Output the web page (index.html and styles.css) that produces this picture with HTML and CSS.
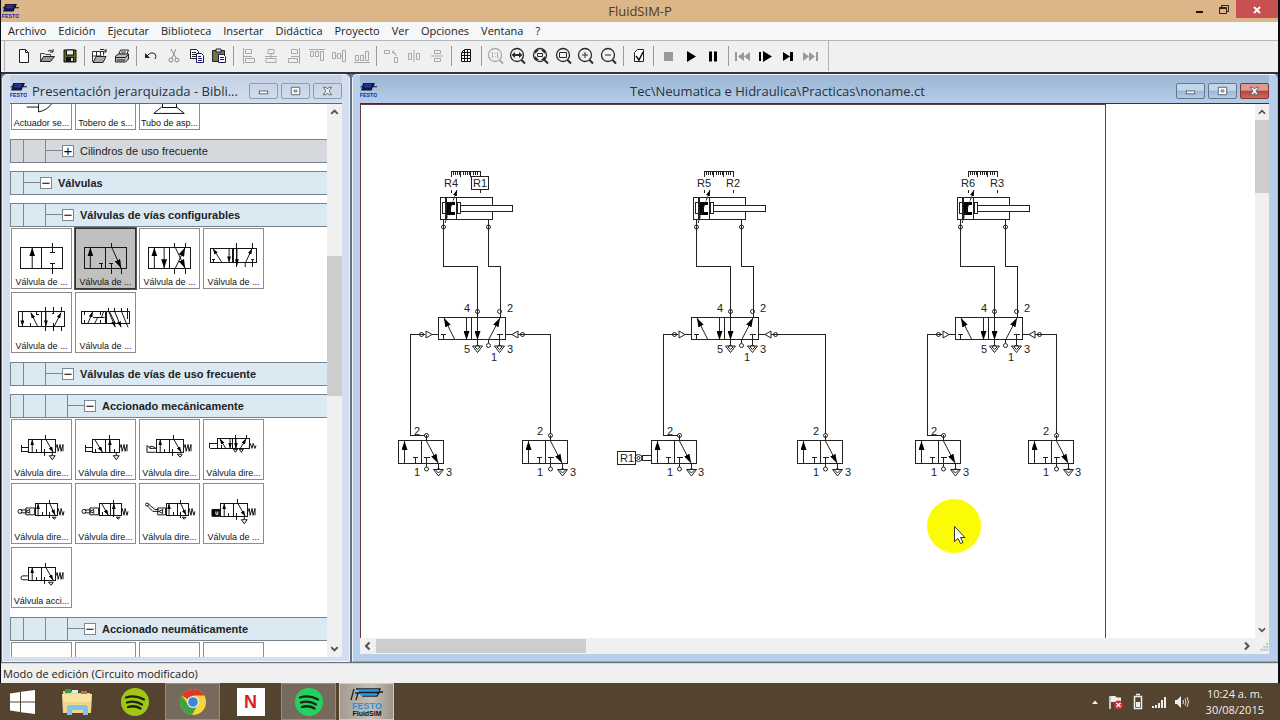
FILE: index.html
```html
<!DOCTYPE html>
<html lang="es">
<head>
<meta charset="utf-8">
<title>FluidSIM-P</title>
<link rel="stylesheet" href="styles.css">
</head>
<body>
<svg class="defs" aria-hidden="true">
  <defs>
    <marker id="head" viewBox="0 0 9 6" refX="9" refY="3" markerWidth="9" markerHeight="6" markerUnits="userSpaceOnUse" orient="auto"><path d="M0 0L9 3L0 6z" fill="#000"/></marker>
    <marker id="tip" viewBox="0 0 6 4" refX="6" refY="2" markerWidth="6" markerHeight="4" markerUnits="userSpaceOnUse" orient="auto"><path d="M0 0L6 2L0 4z" fill="#000"/></marker>
    <symbol id="festo" viewBox="0 0 16 16">
      <path d="M3 1h11l-1 3h3v1h-4l-1 3H1l1-3H0l1-1h1z" fill="#14143c"/>
      <path d="M4 2.500h7M3.500 4.500h7" stroke="#3a50c8" fill="none"/>
      <text x="8" y="14" text-anchor="middle" font-family="Liberation Sans, sans-serif" font-weight="bold" font-size="5" fill="#1c1cb0">FESTO</text>
    </symbol>
    <symbol id="lens" viewBox="0 0 18 18"><circle cx="8" cy="8" r="6.500" fill="none" stroke="currentColor" stroke-width="1.300"/><path d="M12.500 13l3.500 3.500" stroke="currentColor" stroke-width="2"/></symbol>
    <symbol id="spotify" viewBox="0 0 30 30">
      <circle cx="15" cy="15" r="14" fill="currentColor"/>
      <path d="M6 10.500q9-3 18 2M7 15.500q8-2.500 15 2M8 20q7-2 12.500 1.500" fill="none" stroke="#1a2410" stroke-width="2.300" stroke-linecap="round"/>
    </symbol>
    <symbol id="exhaust" viewBox="0 0 12 10" overflow="visible"><path d="M1 2.500H11L6 9z M6 -4V2" /><path d="M3.500 3.500q2.500-4 5 0L6 6z"/></symbol>

    <g id="cylinder">
      <path class="crisp" d="M451.500 177V171.500H480.500V177M453.500 171v4M455.500 171v4M457.500 171v4M459.500 171v4M460.500 171v6M463.500 171v4M465.500 171v4M467.500 171v4M469.500 171v4M470.500 171v6M473.500 171v4M475.500 171v4M477.500 171v4M451.500 190v3M480.500 190v3"/>
      <rect class="crisp" x="440.500" y="197.500" width="52" height="22"/>
      <path class="crisp" d="M442.500 202.500h3v11h-3zM445.500 197v22M446.500 197v22M456.500 197v22M457.500 202.500h3v11h-3z"/>
      <rect class="crisp" x="460.500" y="205.500" width="52" height="6" fill="#fff"/>
      <path d="M447 202h8v3h-4v7h4v3h-8z" fill="#000" stroke="none"/>
      <path d="M445 223L457 190" marker-end="url(#tip)" stroke-dasharray="3 1"/>
      <path class="crisp" d="M443.500 220v46.500H477.500V317M488.500 220v46.500H500V317"/>
      <circle cx="443.500" cy="227" r="2"/><circle cx="488.500" cy="227" r="2"/>
    </g>
    <g id="valve52">
      <rect class="crisp" x="438.500" y="317.500" width="67" height="22"/>
      <path class="crisp" d="M471.500 317v23M441 334.500h5M443.500 334v6M497 334.500h6M499.500 334v12M477.500 311v35M488.500 340v3M432 334.500h6M418 334.500h7M506 334.500h6M518 334.500h7"/>
      <path d="M488.500 340L500 318" marker-end="url(#head)"/>
      <path d="M455 340L444 318" marker-end="url(#head)"/><path d="M466.500 317V340" marker-end="url(#head)"/><path d="M477.500 317V340" marker-end="url(#head)"/>
      <circle cx="477.500" cy="311.500" r="2"/><circle cx="499.500" cy="311.500" r="2"/><circle cx="488.500" cy="345.500" r="2"/>
      <circle cx="421.500" cy="334.500" r="2"/><circle cx="522.500" cy="334.500" r="2"/>
      <path d="M426 331v7l6-3.500zM518 331v7l-6-3.500z"/>
      <use href="#exhaust" x="471.500" y="343.500" width="12" height="10"/><use href="#exhaust" x="493.500" y="343.500" width="12" height="10"/>
    </g>
    <g id="valve32">
      <rect class="crisp" x="398.500" y="440.500" width="45" height="23"/>
      <path class="crisp" d="M421.500 441v22M413 457.500h5M415.500 457v6M424 457.500h6M426.500 457v10M426.500 435v6"/>
      <path d="M404.500 463V441" marker-end="url(#head)"/><path d="M426.500 441L438 463" marker-end="url(#head)"/>
      <circle cx="426.500" cy="435.500" r="2"/><circle cx="426.500" cy="469" r="2"/>
      <use href="#exhaust" x="432.500" y="467" width="12" height="10"/>
    </g>
    <g id="spring"><path d="M44 30l2-5 1 7 2-7 1 7 2-7v7"/></g>
    <g id="body32"><path class="crisp" d="M16.500 19.500h28v14h-28zM30.500 19v15M24.500 30v4M34.500 15v5M33.500 30v7"/><path d="M20.500 34V20" marker-end="url(#tip)"/><path d="M34.500 20L42 33" marker-end="url(#tip)"/></g>
    <g id="vent"><path d="M38 36.500h6l-3 4zM41 33v3"/></g>
    <g id="small32"><path class="crisp" d="M23.500 19.500h23v13h-23zM35.500 19v13M31.500 29v4M38.500 16v4M38.500 29v6"/><path d="M26.500 33V20" marker-end="url(#tip)"/><path d="M38.500 20L44 32" marker-end="url(#tip)"/><path d="M46 29l1-4 2 7 1-7 2 7 1-4"/></g>
  </defs>
</svg>

<div class="app">
  <header class="titlebar">
    <svg class="logo" viewBox="0 0 16 16"><use href="#festo"/></svg>
    <h1>FluidSIM-P</h1>
    <div class="winctl">
      <button aria-label="Minimizar"><svg viewBox="0 0 24 17"><path d="M8 11h7" stroke="#1a120a" stroke-width="2"/></svg></button>
      <button aria-label="Restaurar"><svg viewBox="0 0 24 17" fill="none" stroke="#2c2218"><path d="M7.500 6.500h7v6h-7zM7.500 7.500h7M9.500 6V4.500h7v6H15"/></svg></button>
      <button class="closebtn" aria-label="Cerrar"><svg viewBox="0 0 24 17"><path d="M9 6l6 6M15 6l-6 6" stroke="#fff" stroke-width="1.800"/></svg></button>
    </div>
  </header>

  <nav class="menubar">
    <button>Archivo</button><button>Edición</button><button>Ejecutar</button><button>Biblioteca</button><button>Insertar</button><button>Didáctica</button><button>Proyecto</button><button>Ver</button><button>Opciones</button><button>Ventana</button><button>?</button>
  </nav>

  <div class="toolbar"><div class="strip">
    <button aria-label="Nuevo"><svg viewBox="0 0 16 16"><path d="M3.500 1.500h6l3 3v10h-9zM9.500 1.500v3h3" fill="#fff" stroke="#222"/></svg></button>
    <button aria-label="Abrir"><svg viewBox="0 0 16 16"><path d="M1.500 13.500v-8h4l1 1h5v2" fill="#eee" stroke="#444"/><path d="M1.500 13.500l3-5h11l-4 5z" fill="#999" stroke="#222"/><path d="M9 3q3-2 5 1M14 1v3h-3" fill="none" stroke="#222"/></svg></button>
    <button aria-label="Guardar"><svg viewBox="0 0 16 16"><path d="M2 2h12v12H2z" fill="#5a6a20" stroke="#111"/><path d="M4.500 2h7v5h-7z" fill="#eee" stroke="#111"/><path d="M4 9h8v5H4z" fill="#111"/><path d="M9 10h2v3H9z" fill="#ddd"/></svg></button>
    <i></i>
    <button aria-label="Vista previa"><svg viewBox="0 0 16 16"><path d="M1.500 13.500v-10h11v4M5.500 3.500v9M9.500 3.500v5M1.500 8h9" fill="#fff" stroke="#333"/><path d="M2 14.500l3-6h10l-3 6z" fill="#aaa" stroke="#222"/><path d="M9 1.500h4l2 2M15 1v3h-3" fill="none" stroke="#222"/></svg></button>
    <button aria-label="Imprimir"><svg viewBox="0 0 16 16"><path d="M4.500 7l2-5h8l-2 5M7 4h5M6 6h5" fill="#fff" stroke="#222"/><path d="M1.500 8l3-2h10v5l-3 3h-10z" fill="#bbb" stroke="#222"/><path d="M2 9.500h9.500L14 7M3 12h8" stroke="#222" fill="none"/></svg></button>
    <i></i>
    <button aria-label="Deshacer"><svg viewBox="0 0 16 16"><path d="M2 5v5h5z" fill="#222"/><path d="M4 8q4-5 8-2 2 2 0 5" fill="none" stroke="#222"/></svg></button>
    <button aria-label="Cortar"><svg viewBox="0 0 16 16" fill="none" stroke="#888"><path d="M5 1l5 9M10 1L6 10"/><circle cx="5" cy="12" r="2"/><circle cx="11" cy="12" r="2"/></svg></button>
    <button aria-label="Copiar"><svg viewBox="0 0 16 16"><path d="M1.500 1.500h6l2 2v7h-8zM3 4.500h4M3 6.500h5M3 8.500h5" fill="#fff" stroke="#222"/><path d="M7.500 5.500h5l2 2v7h-7zM9 8.500h3M9 10.500h4M9 12.500h4" fill="#fff" stroke="#1c1c60"/></svg></button>
    <button aria-label="Pegar"><svg viewBox="0 0 16 16"><path d="M1.500 2.500h12v11h-12z" fill="#75753a" stroke="#222"/><path d="M5 1h5v3H5z" fill="#ddd" stroke="#222"/><path d="M7.500 6.500h5l2 2v6h-7zM9 9.500h4M9 11.500h4" fill="#fff" stroke="#1c1c60"/></svg></button>
    <i></i>
    <button class="dim" aria-label="Alinear a la izquierda"><svg viewBox="0 0 16 16"><path d="M2.500 0v16M4.500 1.500h6v4h-6zM4.500 10.500h9v4h-9zM3 8.500h8"/></svg></button>
    <button class="dim" aria-label="Centrar horizontalmente"><svg viewBox="0 0 16 16"><path d="M5 1.500h6v4H5zM3 10.500h10v4H3zM8 5v5M2 8.500h12"/></svg></button>
    <button class="dim" aria-label="Alinear a la derecha"><svg viewBox="0 0 16 16"><path d="M13.500 0v16M5.500 1.500h6v4h-6zM2.500 10.500h9v4h-9zM5 8.500h8"/></svg></button>
    <button class="dim" aria-label="Alinear arriba"><svg viewBox="0 0 16 16"><path d="M0 1.500h16M1.500 3.500h3v5h-3zM6.500 3.500h3v5h-3zM11.500 3.500h3v9h-3z"/></svg></button>
    <button class="dim" aria-label="Centrar verticalmente"><svg viewBox="0 0 16 16"><path d="M1.500 4.500h3v6h-3zM6.500 5.500h3v5h-3zM11.500 2.500h3v11h-3zM5 8h1M10 8h1"/></svg></button>
    <button class="dim" aria-label="Alinear abajo"><svg viewBox="0 0 16 16"><path d="M0 14.500h16M1.500 7.500h3v5h-3zM6.500 7.500h3v5h-3zM11.500 3.500h3v9h-3z"/></svg></button>
    <i></i>
    <button class="dim" aria-label="Girar"><svg viewBox="0 0 16 16"><path d="M1.500 2.500h5v3h-5zM11.500 9.500h3v5h-3zM9 4q4 0 4 4M11 2L9 4l2 2"/></svg></button>
    <button class="dim" aria-label="Reflejar horizontal"><svg viewBox="0 0 16 16"><path d="M8 2v12M2.500 5.500h3v6h-3zM10.500 5.500h3v6h-3z"/></svg></button>
    <button class="dim" aria-label="Reflejar vertical"><svg viewBox="0 0 16 16"><path d="M2 8h12M5.500 2.500h6v3h-6zM5.500 10.500h6v3h-6z"/></svg></button>
    <i></i>
    <button aria-label="Rejilla"><svg viewBox="0 0 16 16"><path d="M3.500 4.500v9h9v-12h-6zM3 7.500h10M3 10.500h10M6.500 2v12M9.500 1v13M4 4.500h9" fill="#fff" stroke="#111"/></svg></button>
    <i></i>
    <button class="lens off" aria-label="Zoom 1:1"><svg viewBox="0 0 18 18"><use href="#lens"/><path d="M5.500 5v6M10.500 5v6M8 6v1M8 9v1" stroke="currentColor"/></svg></button>
    <button class="lens" aria-label="Zoom anterior"><svg viewBox="0 0 18 18"><use href="#lens"/><path d="M2.500 8L6 5v2h4V5l3.500 3L10 11V9H6v2z" fill="currentColor"/></svg></button>
    <button class="lens" aria-label="Mostrar todo"><svg viewBox="0 0 18 18"><use href="#lens"/><path d="M3 3h4L3 7zM13 3H9l4 4zM3 13h4L3 9zM13 13H9l4-4z" fill="currentColor"/><path d="M5.500 6.500h5v3h-5z" fill="none" stroke="currentColor"/></svg></button>
    <button class="lens" aria-label="Zoom de sección"><svg viewBox="0 0 18 18"><use href="#lens"/><path d="M4.500 5.500h7v5h-7z" fill="none" stroke="currentColor"/></svg></button>
    <button class="lens" aria-label="Acercar"><svg viewBox="0 0 18 18"><use href="#lens"/><path d="M5 8h6M8 5v6" stroke="currentColor"/></svg></button>
    <button class="lens" aria-label="Alejar"><svg viewBox="0 0 18 18"><use href="#lens"/><path d="M5 8h6" stroke="currentColor"/></svg></button>
    <i></i>
    <button aria-label="Verificar"><svg viewBox="0 0 16 16"><path d="M3.500 4.500v9h9v-12h-6z" fill="#fff" stroke="#222"/><path d="M5 8l3 4 4-8" fill="none" stroke="#111" stroke-width="1.500"/></svg></button>
    <i></i>
    <button aria-label="Detener"><svg viewBox="0 0 16 16"><path d="M4 4h9v9H4z" fill="#999"/></svg></button>
    <button aria-label="Iniciar"><svg viewBox="0 0 16 16"><path d="M4 3v11l9-5.500z"/></svg></button>
    <button aria-label="Pausa"><svg viewBox="0 0 16 16"><path d="M4 3.500h3v10H4zM9 3.500h3v10H9z"/></svg></button>
    <i></i>
    <button aria-label="Al inicio"><svg viewBox="0 0 16 16"><path d="M0 4h2v9H0zM9 4v9L3 8.500zM15 4v9L9 8.500z" fill="#999"/></svg></button>
    <button aria-label="Paso"><svg viewBox="0 0 16 16"><path d="M1 4h2v9H1zM5 3v11l9-5.500z"/></svg></button>
    <button aria-label="Hasta cambio"><svg viewBox="0 0 16 16"><path d="M3 4v9l7-4.500zM10 4h3v9h-3z"/></svg></button>
    <button aria-label="Siguiente"><svg viewBox="0 0 16 16"><path d="M0 4v9l6-4.500zM6 4v9l6-4.500zM13 4h2v9h-2z" fill="#999"/></svg></button>
  </div></div>

  <main class="mdi">
    <section class="win library">
      <div class="caption">
        <svg class="logo" viewBox="0 0 16 16"><use href="#festo"/></svg>
        <h2>Presentación jerarquizada - Bibli...</h2>
        <button aria-label="Minimizar biblioteca"><svg viewBox="0 0 28 15"><rect x="9.500" y="7.500" width="9" height="3"/></svg></button>
        <button aria-label="Maximizar biblioteca"><svg viewBox="0 0 28 15"><path d="M9.500 3.500h9v8h-9zM12.500 6.500h3v2h-3z"/></svg></button>
        <button aria-label="Cerrar biblioteca"><svg viewBox="0 0 28 15"><path d="M9.500 3.500h3l1.500 2 1.500-2h3l-3 4 3 4h-3l-1.500-2-1.500 2h-3l3-4z"/></svg></button>
      </div>
      <div class="pane">
        <div class="list">
          <div class="tiles cut-top">
            <figure><svg viewBox="0 0 60 10"><path d="M15 3h12V0M27 3v5q9-2 13-8"/></svg><figcaption>Actuador se...</figcaption></figure>
            <figure><svg viewBox="0 0 60 10"></svg><figcaption>Tobero de s...</figcaption></figure>
            <figure><svg viewBox="0 0 60 10"><path class="crisp" d="M22.500 0v3h15V0"/><path d="M22 3L14 9.500h31L37 3"/></svg><figcaption>Tubo de asp...</figcaption></figure>
          </div>
          <div class="branch grey"><s></s><b></b><button aria-label="Expandir">+</button><span>Cilindros de uso frecuente</span></div>
          <div class="branch"><b></b><button aria-label="Contraer">−</button><strong>Válvulas</strong></div>
          <div class="branch"><s></s><b></b><button aria-label="Contraer">−</button><strong>Válvulas de vías configurables</strong></div>
          <div class="tiles">
            <figure><svg viewBox="0 0 60 46"><path class="crisp" d="M8.500 18.500h43v22h-43zM30.500 18v22M41.500 14v10M39 24.500h5M39 35.500h5M41.500 35v11"/><path d="M20.500 40V19" marker-end="url(#head)"/></svg><figcaption>Válvula de ...</figcaption></figure>
            <figure class="selected"><svg viewBox="0 0 60 46"><path class="crisp" d="M8.500 18.500h43v22h-43zM30.500 18v22M36.500 14v5M23 35.500h4M25.500 35v5M34 35.500h4M36.500 35v11M46.500 40v6"/><path d="M14.500 40V19" marker-end="url(#head)"/><path d="M36.500 19L46 40" marker-end="url(#head)"/></svg><figcaption>Válvula de ...</figcaption></figure>
            <figure><svg viewBox="0 0 60 46"><path class="crisp" d="M8.500 18.500h43v22h-43zM30.500 18v22M35.500 14v5M46.500 14v5M35.500 40v6M46.500 40v6"/><path d="M14.500 40V19" marker-end="url(#head)"/><path d="M24.500 19V40" marker-end="url(#head)"/><path d="M36 19L46 40" marker-end="url(#head)"/><path d="M36 40L46 19" marker-end="url(#head)"/></svg><figcaption>Válvula de ...</figcaption></figure>
            <figure><svg viewBox="0 0 60 46"><path class="crisp" d="M6.500 19.500h47v15h-47zM28.500 19v15M30.500 19v15M8 31.500h3M9.500 31v4M48 31.500h3M49.500 31v8M49.500 14v6M33.500 14v25"/><path d="M18 34L9 20" marker-end="url(#tip)"/><path d="M25.500 20V34" marker-end="url(#tip)"/><path d="M33.500 20V37" marker-end="url(#tip)"/><path d="M42 39V35L49 20" marker-end="url(#tip)"/></svg><figcaption>Válvula de ...</figcaption></figure>
            <figure><svg viewBox="0 0 60 46"><path class="crisp" d="M6.500 18.500h47v16h-47zM29.500 18v16M34.500 14v25M42.500 14v7h-2M50.500 14v5M50.500 35v4M42.500 31v8M24.500 18v4h3M18.500 31v4"/><path d="M10.500 19V34" marker-end="url(#tip)"/><path d="M26 34L19 20" marker-end="url(#tip)"/><path d="M34.500 19V34" marker-end="url(#tip)"/><path d="M43 34L50 20" marker-end="url(#tip)"/></svg><figcaption>Válvula de ...</figcaption></figure>
            <figure><svg viewBox="0 0 60 46"><path class="crisp" d="M5.500 18.500h49v13h-49zM29.500 18v13M31.500 18v13M8.500 18v4M8.500 28v4M33.500 15v4M39.500 15v4M46.500 15v4M52.500 15v12M24.500 18v4M24.500 28v4"/><path d="M12 31L17 19" marker-end="url(#tip)"/><path d="M19 31l3-6h7M17 25h9L28 19"/><path d="M33 18l7 17" marker-end="url(#tip)"/><path d="M39 18l7 17" marker-end="url(#tip)"/><path d="M46 18l7 17M40 31l-6-12"/></svg><figcaption>Válvula de ...</figcaption></figure>
          </div>
          <div class="branch"><s></s><b></b><button aria-label="Contraer">−</button><strong>Válvulas de vías de uso frecuente</strong></div>
          <div class="branch"><s></s><s></s><b></b><button aria-label="Contraer">−</button><strong>Accionado mecánicamente</strong></div>
          <div class="tiles">
            <figure><svg viewBox="0 0 60 46"><use href="#body32"/><use href="#vent"/><use href="#spring"/><path class="crisp" d="M9.500 26v7M9 28.500h7M9 32.500h7"/></svg><figcaption>Válvula dire...</figcaption></figure>
            <figure><svg viewBox="0 0 60 46"><path class="crisp" d="M16.500 19.500h28v14h-28zM30.500 19v15M19.500 30v4M34.500 15v19M39.500 30v4M9.500 26v7M9 28.500h7M9 32.500h7"/><path d="M19 20L27 33" marker-end="url(#tip)"/><path d="M34.500 33V20" marker-end="url(#tip)"/><use href="#vent"/><use href="#spring"/></svg><figcaption>Válvula dire...</figcaption></figure>
            <figure><svg viewBox="0 0 60 46"><use href="#body32"/><use href="#spring"/><path d="M38 35h5l-2 3zM7 26v7h9M7 26l3 3h6M10 29v-2h3l3 2"/></svg><figcaption>Válvula dire...</figcaption></figure>
            <figure><svg viewBox="0 0 60 46"><path class="crisp" d="M13.500 18.500h33v11h-33zM28.500 18v11M32.500 15v15M43.500 15v4M5.500 23v6h8M5.500 24.500h8M17.500 26v4"/><path d="M22 29L16 19" marker-end="url(#tip)"/><path d="M26.500 19V29" marker-end="url(#tip)"/><path d="M32.500 19V29" marker-end="url(#tip)"/><path d="M37 29L43 19" marker-end="url(#tip)"/><path d="M30 30h4l-2 3zM36 30h4l-2 3zM46 28l1-4 2 5 1-5 2 5 1-3"/></svg><figcaption>Válvula dire...</figcaption></figure>
            <figure><svg viewBox="0 0 60 46"><use href="#small32"/><path d="M14 24.500h9v7h-9zM14 28l4-2v4zM9 26.500h6M9 29.500h6M41 34h4l-2 2z"/><circle cx="8" cy="28" r="2"/></svg><figcaption>Válvula dire...</figcaption></figure>
            <figure><svg viewBox="0 0 60 46"><path class="crisp" d="M23.500 19.500h23v13h-23zM35.500 19v13M26.500 29v4M38.500 16v18"/><path d="M26 20L33 32" marker-end="url(#tip)"/><path d="M38.500 32V20" marker-end="url(#tip)"/><path d="M46 29l1-4 2 7 1-7 2 7 1-4M14 24.500h9v7h-9zM14 28l4-2v4zM9 26.500h6M9 29.500h6M41 34h4l-2 2z"/><circle cx="8" cy="28" r="2"/></svg><figcaption>Válvula dire...</figcaption></figure>
            <figure><svg viewBox="0 0 60 46"><g transform="translate(3 0)"><use href="#small32"/></g><path d="M18 24.500h8v7h-8zM19 28l4-2v4zM7 22l6 6h6M8 20l7 6h4M43 34h4l-2 2z"/><circle cx="7" cy="21" r="1.500"/></svg><figcaption>Válvula dire...</figcaption></figure>
            <figure><svg viewBox="0 0 60 46"><use href="#body32"/><use href="#vent"/><use href="#spring"/><path d="M8 26h8v7H8z" fill="#000"/><path d="M12 28v3h2v-3" stroke="#fff"/></svg><figcaption>Válvula de ...</figcaption></figure>
            <figure><svg viewBox="0 0 60 46"><use href="#body32"/><use href="#spring"/><path d="M16 28.500h-5q-2 0-2 2t2 2h5M37 35h5l-2 3z"/></svg><figcaption>Válvula acci...</figcaption></figure>
          </div>
          <div class="branch"><s></s><s></s><b></b><button aria-label="Contraer">−</button><strong>Accionado neumáticamente</strong></div>
          <div class="tiles"><figure></figure><figure></figure><figure></figure><figure></figure></div>
        </div>
        <div class="vscroll lib">
          <button aria-label="Subir"><svg viewBox="0 0 16 16"><path d="M4.500 10L8 6.500l3.500 3.500"/></svg></button>
          <div class="track"><div class="thumb"></div></div>
          <button aria-label="Bajar"><svg viewBox="0 0 16 16"><path d="M4.500 6L8 9.500 11.500 6"/></svg></button>
        </div>
      </div>
    </section>

    <section class="win circuit">
      <div class="caption">
        <svg class="logo" viewBox="0 0 16 16"><use href="#festo"/></svg>
        <h2>Tec\Neumatica e Hidraulica\Practicas\noname.ct</h2>
        <button aria-label="Minimizar circuito"><svg viewBox="0 0 28 15"><rect x="9.500" y="7.500" width="9" height="3"/></svg></button>
        <button aria-label="Maximizar circuito"><svg viewBox="0 0 28 15"><path d="M9.500 3.500h9v8h-9zM12.500 6.500h3v2h-3z"/></svg></button>
        <button class="red" aria-label="Cerrar circuito"><svg viewBox="0 0 28 15"><path d="M9.500 3.500h3l1.500 2 1.500-2h3l-3 4 3 4h-3l-1.500-2-1.500 2h-3l3-4z"/></svg></button>
      </div>
      <div class="pane sheet">
        <div class="canvas">
          <svg viewBox="360 104 895 534" preserveAspectRatio="xMinYMin slice">
            <path class="crisp" d="M360.500 638V104.500H1105.500V638" stroke="#6e3a44"/>
            <use href="#cylinder"/><use href="#cylinder" x="253"/><use href="#cylinder" x="517"/>
            <use href="#valve52"/><use href="#valve52" x="253"/><use href="#valve52" x="517"/>
            <use href="#valve32"/><use href="#valve32" x="124"/><use href="#valve32" x="253"/><use href="#valve32" x="399"/><use href="#valve32" x="517"/><use href="#valve32" x="630"/>
            <path class="crisp" d="M419 334.500H410.500V435.500H425M525 334.500H550.500V434M672 334.500H663.500V435.500H678M778 334.500H825.500V434M936 334.500H927.500V435.500H942M1042 334.500H1056.500V434"/>
            <path class="crisp" d="M471.500 176.500h17v13h-17zM617.500 451.500h18v13h-18zM642 455.500h10M642 460.500h10M642.500 455v5"/>
            <circle cx="638.500" cy="458" r="3.500"/><circle cx="638.500" cy="458" r="1.500"/>
            <g class="labels">
              <text x="444" y="187">R4</text><text x="473" y="187">R1</text><text x="697" y="187">R5</text><text x="726" y="187">R2</text><text x="961" y="187">R6</text><text x="990" y="187">R3</text>
              <text x="464" y="312">4</text><text x="507" y="312">2</text><text x="464" y="353">5</text><text x="491" y="361">1</text><text x="507" y="353">3</text>
              <text x="717" y="312">4</text><text x="760" y="312">2</text><text x="717" y="353">5</text><text x="744" y="361">1</text><text x="760" y="353">3</text>
              <text x="981" y="312">4</text><text x="1024" y="312">2</text><text x="981" y="353">5</text><text x="1008" y="361">1</text><text x="1024" y="353">3</text>
              <text x="414" y="435">2</text><text x="414" y="476">1</text><text x="446" y="476">3</text>
              <text x="537" y="435">2</text><text x="537" y="476">1</text><text x="570" y="476">3</text>
              <text x="667" y="435">2</text><text x="667" y="476">1</text><text x="698" y="476">3</text>
              <text x="813" y="435">2</text><text x="813" y="476">1</text><text x="845" y="476">3</text>
              <text x="931" y="435">2</text><text x="931" y="476">1</text><text x="963" y="476">3</text>
              <text x="1043" y="435">2</text><text x="1043" y="476">1</text><text x="1075" y="476">3</text>
              <text x="620" y="462">R1</text>
            </g>
            <circle cx="954" cy="526" r="27" fill="#fbfb05" stroke="none"/>
            <path d="M954.500 526.500v15l3.500-3 2.500 5 2.500-1-2.500-5h4.500z" fill="#fff" stroke="#333"/>
          </svg>
        </div>
        <div class="vscroll doc">
          <button aria-label="Subir"><svg viewBox="0 0 16 16"><path d="M4.500 10L8 6.500l3.500 3.500"/></svg></button>
          <div class="track"><div class="thumb"></div></div>
          <button aria-label="Bajar"><svg viewBox="0 0 16 16"><path d="M4.500 6L8 9.500 11.500 6"/></svg></button>
        </div>
        <div class="hscroll">
          <button aria-label="Izquierda"><svg viewBox="0 0 16 16"><path d="M9.500 4.500L6 8l3.500 3.500"/></svg></button>
          <div class="track"><div class="thumb"></div></div>
          <button aria-label="Derecha"><svg viewBox="0 0 16 16"><path d="M6 4.500L9.500 8 6 11.500"/></svg></button>
        </div>
        <svg class="grip" viewBox="0 0 15 16"><path d="M12 5h2v2h-2zM12 8h2v2h-2zM12 11h2v2h-2zM9 8h2v2H9zM9 11h2v2H9zM6 11h2v2H6z"/></svg>
      </div>
    </section>
  </main>

  <footer class="status">Modo de edición (Circuito modificado)</footer>
</div>

<div class="taskbar">
  <button class="start" aria-label="Inicio"><svg width="26" height="24" viewBox="0 0 26 24"><path d="M0 3.500l10-1.500v9.500H0zM11 1.800L25 0v11.500H11zM0 12.500h10V22L0 20.500zM11 12.500h14V24l-14-1.800z" fill="#fff"/></svg></button>
  <button aria-label="Explorador"><svg width="30" height="28" viewBox="0 0 30 28"><path d="M1 3h8l2 2h17v20H1z" fill="#e8cf7c"/><path d="M3 1h6v4H3z" fill="#3a9a4a"/><path d="M10 2h6v3h-6z" fill="#e8e8e8"/><path d="M19 3h6v3h-6z" fill="#c86a50"/><path d="M0 6h30l-1 19H1z" fill="#f6e3a0"/><path d="M1 14h28v11H1z" fill="#efd68a"/><path d="M5 27V20q0-3 3-3h15q3 0 3 3v7h-5v-5H10v5z" fill="#7cc4ea"/></svg></button>
  <button aria-label="Spotify" class="olive"><svg width="30" height="30" viewBox="0 0 30 30"><use href="#spotify"/></svg></button>
  <button aria-label="Chrome" class="open"><svg width="28" height="28" viewBox="0 0 28 28"><circle cx="14" cy="14" r="13" fill="#f7d33c"/><path d="M14 14L2.700 7.500A13 13 0 0 1 25.300 7.500H14z" fill="#d93a2b"/><path d="M2.700 7.500A13 13 0 0 0 13 27l5.500-10L14 14 8 15z" fill="#3fa048"/><circle cx="14" cy="14" r="6" fill="#f4f4f4"/><circle cx="14" cy="14" r="4.800" fill="#3f86d8"/></svg></button>
  <button aria-label="Netflix"><span class="netflix">N</span></button>
  <button aria-label="Spotify abierto" class="open green"><svg width="30" height="30" viewBox="0 0 30 30"><use href="#spotify"/></svg></button>
  <button aria-label="FluidSIM" class="open active"><svg width="34" height="32" viewBox="0 0 34 32"><path d="M6 3h24l-1 3H9M5 7h24l-2 3H12M4 3L1 14M8 7L6 14M30 6h3" fill="none" stroke="#17222c" stroke-width="1.300"/><path d="M8 4.500h20M10 8.500h16" stroke="#2f9be6" stroke-width="2"/><text x="17" y="23" text-anchor="middle" font-family="Liberation Sans, sans-serif" font-weight="bold" font-size="9" fill="#2f8fd8">FESTO</text><text x="17" y="30" text-anchor="middle" font-family="Liberation Sans, sans-serif" font-weight="bold" font-size="7" fill="#111">FluidSIM</text></svg></button>
  <div class="tray">
    <svg width="10" height="18" viewBox="0 0 10 18"><path d="M2 11l3-3.500L8 11z" fill="#eee"/></svg>
    <svg width="18" height="18" viewBox="0 0 18 18"><path d="M3 3v13" stroke="#eee" stroke-width="1.500"/><path d="M4 3h4l2 1.500h4V10H9L8 9H4z" fill="#eee"/><circle cx="11.500" cy="12" r="4.500" fill="#cf2f32"/><path d="M9.500 10l4 4M13.500 10l-4 4" stroke="#fff" stroke-width="1.300"/></svg>
    <svg width="12" height="18" viewBox="0 0 12 18"><path d="M4 1.500h4M2.500 3.500h7v12h-7z" fill="none" stroke="#eee" stroke-width="1.500"/><path d="M4 9h4v5H4z" fill="#eee"/></svg>
    <svg width="16" height="18" viewBox="0 0 16 18"><path d="M1 13h2v2H1zM4 12h2v3H4zM7 10h2v5H7zM10 7h2v8h-2zM13 4h2v11h-2z" fill="#eee"/></svg>
    <svg width="16" height="18" viewBox="0 0 16 18"><path d="M1 7h2l4-4v12l-4-4H1z" fill="#eee"/><path d="M9 7q1 2 0 4M11 5.500q2 3.500 0 7M13 4q3 5 0 10" fill="none" stroke="#ddd"/></svg>
    <time><span>10:24 a. m.</span><span>30/08/2015</span></time>
  </div>
</div>
</body>
</html>
```

FILE: styles.css
```css
* { box-sizing: border-box; }
body {
  margin: 0;
  height: 100vh;
  display: flex;
  flex-direction: column;
  overflow: hidden;
  background: #0c0c10;
  font-family: "Open Sans", "Noto Sans", sans-serif;
  font-size: 11px;
  color: #222;
}
button { border: 0; padding: 0; margin: 0; background: none; font: inherit; color: inherit; }
h1, h2, figure { margin: 0; font-weight: 400; }
svg { display: block; }
.defs { position: absolute; width: 0; height: 0; }
.crisp { shape-rendering: crispEdges; }
.logo { width: 17px; height: 17px; flex: none; }

.app { flex: 1; min-height: 0; display: flex; flex-direction: column; margin: 0 2px 0 1px; }

.titlebar {
  height: 22px;
  flex: none;
  display: grid;
  grid-template-columns: 1fr auto 1fr;
  padding-left: 1px;
  background: #dcb588;
}
.titlebar .logo { margin-top: 3px; }
.titlebar h1 { font-size: 13px; line-height: 22px; color: #4c3b28; }
.winctl { display: flex; justify-content: flex-end; }
.winctl button { width: 24px; height: 18px; }
.winctl svg { width: 24px; height: 17px; margin: 0 auto; }
.winctl .closebtn { width: 42px; background: #c75050; }

.menubar {
  flex: none;
  height: 19px;
  display: flex;
  gap: 12px;
  padding-left: 7px;
  background: #f5f7f8;
  border-bottom: 1px solid #b4b8ba;
}
.menubar button { line-height: 16px; height: 17px; }

.toolbar { flex: none; height: 31px; background: #f0f0f0; padding-left: 3px; }
.strip {
  width: 825px;
  height: 30px;
  padding: 0 6px 0 8px;
  display: flex;
  align-items: center;
  border-left: 1px solid #b0b0b0;
  border-right: 1px solid #b0b0b0;
}
.strip button { flex: 1; height: 22px; }
.strip svg { width: 16px; height: 16px; margin: 0 auto; }
.strip i { flex: none; width: 1px; height: 20px; margin: 0 3px; background: #999; }
.strip .dim path { fill: none; stroke: #a8a8a8; }
.strip .lens { color: #2a2a2a; }
.strip .lens.off { color: #aaa; }
.strip .lens svg { width: 18px; height: 18px; }

.mdi {
  flex: 1;
  min-height: 0;
  display: flex;
  gap: 2px;
  padding: 0 0 1px 1px;
  background: #68737e;
  border-top: 2px solid #2c363d;
}
.win { display: flex; flex-direction: column; min-width: 0; border: 1px solid #eef4fa; border-radius: 5px 5px 0 0; }
.library { flex: 0 0 348px; background: #d3dfee; padding: 0 7px 4px 7px; }
.circuit { flex: 1; background: #b7cfea; padding: 0 8px 7px 7px; border-right-color: #6fd0ee; border-bottom-color: #55c4e4; }
.caption { flex: none; height: 28px; display: flex; align-items: center; gap: 3px; padding-top: 3px; }
.library .caption { background: linear-gradient(#c2d1e2, #d3dfee); }
.circuit .caption { background: linear-gradient(#9bb6d3, #b5cde8); }
.caption h2 { flex: 1; min-width: 0; font-size: 13px; line-height: 20px; white-space: nowrap; padding-left: 2px; color: #27323e; }
.circuit h2 { text-align: center; }
.caption button { width: 29px; height: 16px; border: 1px solid #8c9cb0; border-radius: 2px; }
.caption button svg { width: 27px; height: 14px; fill: #fff; stroke: #56606c; }
.circuit .caption button { background: linear-gradient(#c2d5e9 45%, #9bb8d6 50%, #b5cce4); border-color: #62788f; }
.circuit .caption .red { background: linear-gradient(#dd9b92 45%, #bb4034 50%, #cf6b58); border-color: #7a3a3c; }

.pane { flex: 1; min-height: 0; background: #fff; border-top: 1px solid #5c6c7c; }
.library .pane { display: grid; grid-template-columns: 1fr 15px; }
.list { overflow: hidden; min-height: 0; font-family: "Liberation Sans", Arial, sans-serif; }
.tiles { display: grid; grid-template-columns: repeat(4, 61px); gap: 3px; padding-left: 1px; }
.tiles + .branch { margin-top: 9px; }
.tiles figure {
  height: 61px;
  border: 1px solid #8c8c8c;
  display: flex;
  flex-direction: column;
  justify-content: space-between;
}
.tiles svg { width: 59px; height: 45px; fill: none; stroke: #111; }
.tiles figcaption { font-size: 9px; line-height: 12px; text-align: center; white-space: nowrap; color: #111; }
.cut-top figure { height: 26px; border-top: 0; }
.cut-top svg { height: 10px; overflow: hidden; }
.tiles .selected { background: #c0c0c0; border-color: #333; outline: 1px solid #555; }
.branch {
  height: 24px;
  display: flex;
  align-items: center;
  padding-left: 12px;
  background: #dbe9f3;
  border: solid #75828c;
  border-width: 1px 0 1px 1px;
  font-size: 11px;
  line-height: 20px;
  white-space: nowrap;
}
.branch + .branch { margin-top: 8px; }
.branch + .tiles { margin-top: 1px; }
.branch.grey { background: #d5d9dd; }
.branch s { flex: none; width: 22px; height: 22px; border-left: 1px solid #7c8890; }
.branch b { flex: none; width: 17px; height: 22px; border-left: 1px solid #7c8890; background: linear-gradient(#7c8890, #7c8890) 0 10px / 100% 1px no-repeat; }
.branch button { width: 12px; height: 12px; background: #fff; border: 1px solid #7c8890; font-size: 15px; line-height: 10px; margin-right: 6px; display: flex; align-items: center; justify-content: center; color: #111; }

.vscroll { display: grid; grid-template-rows: 16px 1fr 16px; background: #f0f0f0; min-height: 0; }
.vscroll svg, .hscroll svg { width: 100%; height: 16px; fill: none; stroke: #505050; stroke-width: 2; }
.track { display: grid; min-width: 0; min-height: 0; }
.thumb { background: #cdcdcd; }
.lib .track { grid-template-rows: 136fr 140fr 245fr; }
.lib .thumb { grid-row: 2; }
.doc .track { grid-template-rows: 73fr 429fr; }
.sheet { display: grid; grid-template-columns: 1fr 14px; grid-template-rows: 1fr 16px; border-color: #472a32; }
.canvas { min-width: 0; min-height: 0; overflow: hidden; }
.canvas svg { width: 100%; height: 100%; fill: none; stroke: #222; }
.labels text { font: 11px "Liberation Sans", Arial, sans-serif; fill: #222; stroke: none; }
.hscroll { display: grid; grid-template-columns: 16px 1fr 16px; background: #f0f0f0; }
.hscroll .track { grid-template-columns: 210fr 653fr; padding: 1px 0; }
.grip { width: 14px; height: 16px; background: #f0f0f0; fill: #bbb; }

.status { flex: none; height: 20px; padding-left: 2px; line-height: 20px; background: #f0f0f0; border-top: 1px solid #d8d8d8; }

.taskbar { flex: none; height: 37px; display: flex; gap: 3px; background: #54432f; }
.taskbar > button { width: 55px; display: flex; align-items: center; justify-content: center; }
.taskbar .start { width: 46px; }
.taskbar .open { background: #766a5c; border: 1px solid #978c80; }
.taskbar .active { background: linear-gradient(90deg, #a39c92, #c4bfb8 60%, #9c948a); border-color: #d0cbc4; }
.olive { color: #a2c614; }
.green { color: #22d160; }
.netflix { width: 28px; height: 28px; background: #fff; color: #d81f26; font: bold 18px/29px "Liberation Sans", sans-serif; text-align: center; }
.tray { margin-left: auto; display: flex; align-items: center; gap: 7px; padding-right: 16px; color: #f2efec; }
.tray time { display: flex; flex-direction: column; text-align: center; line-height: 16px; margin-left: 9px; }
```
